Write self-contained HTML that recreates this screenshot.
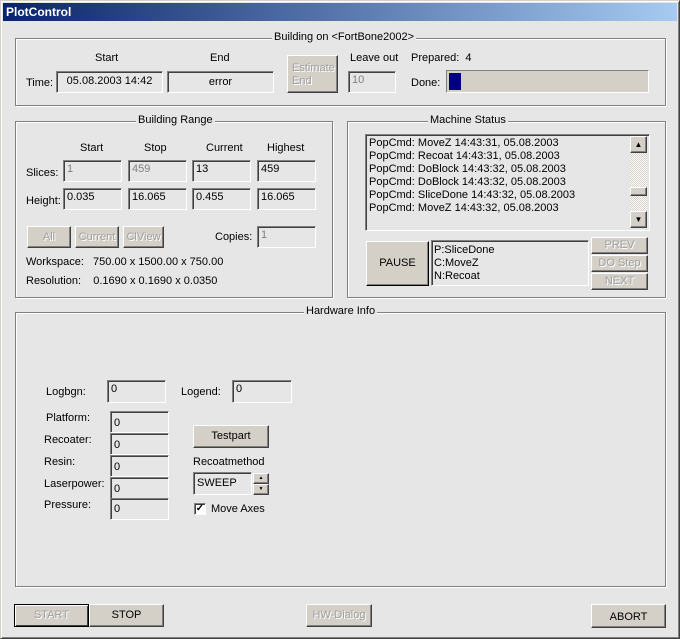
<!DOCTYPE html><html><head><style>
body{margin:0;width:680px;height:639px;overflow:hidden;background:#e6e6e6;font-family:"Liberation Sans",sans-serif;font-size:11px;color:#000;position:relative}
.a{position:absolute}
.t{position:absolute;white-space:nowrap;line-height:13px}
.f{position:absolute;box-sizing:border-box;border:1px solid;border-color:#808080 #fff #fff #808080;box-shadow:inset 1px 1px #404040;background:#e6e6e6;padding:1px 0 0 3px;line-height:14px;white-space:nowrap}
.b{position:absolute;box-sizing:border-box;border:1px solid;border-color:#fff #404040 #404040 #fff;box-shadow:inset -1px -1px #808080;background:#d4d0c8;text-align:center;line-height:14px;white-space:nowrap}
.d{color:#a0a0a0;text-shadow:1px 1px #fff}
.g{position:absolute;box-sizing:border-box;border:1px solid #808080;box-shadow:1px 1px #fff,inset 1px 1px #fff}
.gl{position:absolute;background:#e6e6e6;padding:0 2px;top:-8px;line-height:13px;white-space:nowrap}
.gr{color:#808080}
</style></head><body>
<div class="a" style="left:0;top:0;width:680px;height:639px;box-sizing:border-box;border:1px solid;border-color:#d4d0c8 #404040 #404040 #d4d0c8;box-shadow:inset 1px 1px #fff,inset -1px -1px #808080"></div>
<div class="a" style="left:3px;top:3px;width:674px;height:18px;background:linear-gradient(90deg,#0a246a,#a6caf0);color:#fff;font-weight:bold;font-size:12px;line-height:18px;padding-left:3px;box-sizing:border-box">PlotControl</div>

<div class="g" style="left:15px;top:38px;width:651px;height:68px"><div class="gl" style="left:256px">Building on &lt;FortBone2002&gt;</div></div>
<div class="t" style="left:95px;top:52px">Start</div>
<div class="t" style="left:210px;top:52px">End</div>
<div class="t" style="left:26px;top:77px">Time:</div>
<div class="f" style="left:56px;top:71px;width:107px;height:22px;text-align:center;padding:2px 0 0">05.08.2003 14:42</div>
<div class="f" style="left:167px;top:71px;width:107px;height:22px;text-align:center;padding:3px 0 0">error</div>
<div class="b d" style="left:287px;top:55px;width:51px;height:38px;text-align:left;padding:6px 0 0 4px;line-height:13px">Estimate<br>End</div>
<div class="t" style="left:350px;top:52px">Leave out</div>
<div class="f gr" style="left:348px;top:71px;width:48px;height:22px">10</div>
<div class="t" style="left:411px;top:52px">Prepared:&nbsp; 4</div>
<div class="t" style="left:411px;top:77px">Done:</div>
<div class="a" style="left:446px;top:70px;width:203px;height:23px;box-sizing:border-box;border:1px solid;border-color:#808080 #fff #fff #808080;background:#d4d0c8"><div class="a" style="left:2px;top:2px;width:12px;height:17px;background:#000080"></div></div>

<div class="g" style="left:15px;top:121px;width:318px;height:177px"><div class="gl" style="left:120px">Building Range</div></div>
<div class="t" style="left:80px;top:142px">Start</div>
<div class="t" style="left:144px;top:142px">Stop</div>
<div class="t" style="left:206px;top:142px">Current</div>
<div class="t" style="left:267px;top:142px">Highest</div>
<div class="t" style="left:26px;top:167px">Slices:</div>
<div class="t" style="left:26px;top:195px">Height:</div>
<div class="f gr" style="left:63px;top:160px;width:59px;height:22px">1</div>
<div class="f gr" style="left:128px;top:160px;width:59px;height:22px">459</div>
<div class="f" style="left:192px;top:160px;width:59px;height:22px">13</div>
<div class="f" style="left:257px;top:160px;width:59px;height:22px">459</div>
<div class="f" style="left:63px;top:188px;width:59px;height:22px">0.035</div>
<div class="f" style="left:128px;top:188px;width:59px;height:22px">16.065</div>
<div class="f" style="left:192px;top:188px;width:59px;height:22px">0.455</div>
<div class="f" style="left:257px;top:188px;width:59px;height:22px">16.065</div>
<div class="b d" style="left:27px;top:226px;width:44px;height:22px;line-height:20px">All</div>
<div class="b d" style="left:75px;top:226px;width:44px;height:22px;line-height:20px">Current</div>
<div class="b d" style="left:123px;top:226px;width:41px;height:22px;line-height:20px">ClView</div>
<div class="t" style="left:215px;top:231px">Copies:</div>
<div class="f gr" style="left:257px;top:226px;width:59px;height:22px">1</div>
<div class="t" style="left:26px;top:256px">Workspace:&nbsp;&nbsp; 750.00 x 1500.00 x 750.00</div>
<div class="t" style="left:26px;top:275px">Resolution:&nbsp;&nbsp;&nbsp; 0.1690 x 0.1690 x 0.0350</div>

<div class="g" style="left:347px;top:121px;width:319px;height:177px"><div class="gl" style="left:80px">Machine Status</div></div>
<div class="f" style="left:365px;top:134px;width:285px;height:97px;padding:2px 0 0 3px;line-height:13px">PopCmd: MoveZ 14:43:31, 05.08.2003<br>PopCmd: Recoat 14:43:31, 05.08.2003<br>PopCmd: DoBlock 14:43:32, 05.08.2003<br>PopCmd: DoBlock 14:43:32, 05.08.2003<br>PopCmd: SliceDone 14:43:32, 05.08.2003<br>PopCmd: MoveZ 14:43:32, 05.08.2003
<div class="a" style="left:264px;top:1px;width:17px;height:92px;background:repeating-conic-gradient(#fff 0 25%,#d4d0c8 0 50%) 0 0/2px 2px"></div>
<div class="b" style="left:264px;top:1px;width:17px;height:17px;font-size:8px;line-height:15px">▲</div>
<div class="b" style="left:264px;top:52px;width:17px;height:9px"></div>
<div class="b" style="left:264px;top:76px;width:17px;height:17px;font-size:8px;line-height:15px">▼</div></div>
<div class="b" style="left:366px;top:241px;width:63px;height:45px;line-height:43px;border-color:#fff #000 #000 #fff">PAUSE</div>
<div class="f" style="left:431px;top:240px;width:158px;height:46px;padding:3px 0 0 2px;line-height:13px">P:SliceDone<br>C:MoveZ<br>N:Recoat</div>
<div class="b d" style="left:591px;top:237px;width:57px;height:17px">PREV</div>
<div class="b d" style="left:591px;top:255px;width:57px;height:17px">DO Step</div>
<div class="b d" style="left:591px;top:273px;width:57px;height:17px">NEXT</div>

<div class="g" style="left:15px;top:312px;width:651px;height:275px"><div class="gl" style="left:288px">Hardware Info</div></div>
<div class="t" style="left:46px;top:386px">Logbgn:</div>
<div class="f" style="left:107px;top:380px;width:59px;height:23px">0</div>
<div class="t" style="left:181px;top:386px">Logend:</div>
<div class="f" style="left:232px;top:380px;width:60px;height:23px">0</div>
<div class="t" style="left:46px;top:412px">Platform:</div>
<div class="t" style="left:44px;top:434px">Recoater:</div>
<div class="t" style="left:44px;top:456px">Resin:</div>
<div class="t" style="left:44px;top:478px">Laserpower:</div>
<div class="t" style="left:44px;top:499px">Pressure:</div>
<div class="f" style="left:110px;top:411px;width:59px;height:22px;padding-top:4px">0</div>
<div class="f" style="left:110px;top:433px;width:59px;height:22px;padding-top:4px">0</div>
<div class="f" style="left:110px;top:455px;width:59px;height:22px;padding-top:4px">0</div>
<div class="f" style="left:110px;top:477px;width:59px;height:22px;padding-top:4px">0</div>
<div class="f" style="left:110px;top:498px;width:59px;height:22px;padding-top:3px">0</div>
<div class="b" style="left:193px;top:425px;width:76px;height:23px;line-height:20px">Testpart</div>
<div class="t" style="left:193px;top:456px">Recoatmethod</div>
<div class="f" style="left:193px;top:472px;width:59px;height:23px;padding-top:3px">SWEEP</div>
<div class="b" style="left:253px;top:473px;width:16px;height:11px;font-size:5px;line-height:9px">▲</div>
<div class="b" style="left:253px;top:484px;width:16px;height:11px;font-size:5px;line-height:9px">▼</div>
<div class="a" style="left:194px;top:503px;width:12px;height:12px;box-sizing:border-box;border:1px solid;border-color:#808080 #fff #fff #808080;box-shadow:inset 1px 1px #404040;background:#fff;font-size:10px;line-height:10px;text-align:center;font-weight:bold">✓</div>
<div class="t" style="left:211px;top:503px">Move Axes</div>

<div class="b d" style="left:14px;top:604px;width:75px;height:23px;line-height:20px;border-color:#000;box-shadow:inset 1px 1px #fff,inset -1px -1px #404040">START</div>
<div class="b" style="left:89px;top:604px;width:75px;height:23px;line-height:20px">STOP</div>
<div class="b d" style="left:306px;top:604px;width:66px;height:23px;line-height:20px">HW-Dialog</div>
<div class="b" style="left:591px;top:604px;width:75px;height:24px;line-height:24px">ABORT</div>
</body></html>
